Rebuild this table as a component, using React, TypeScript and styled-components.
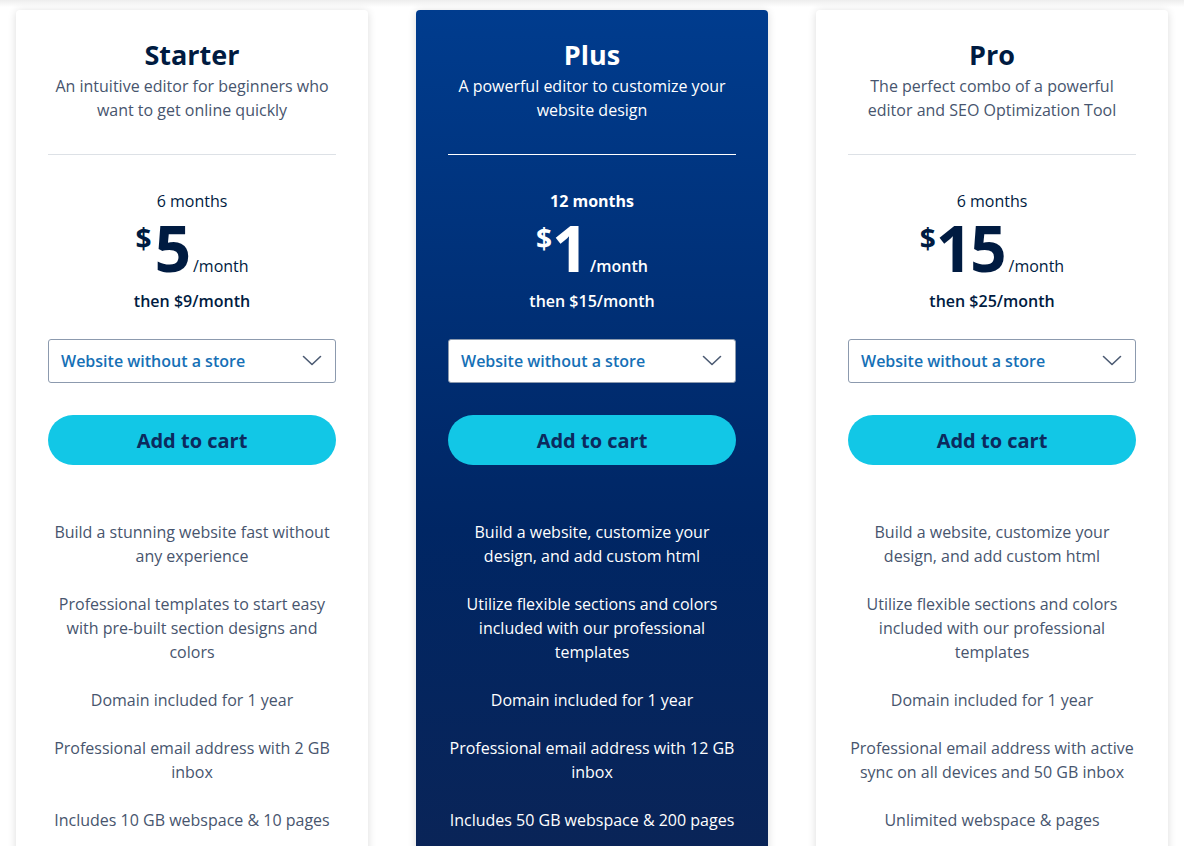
import styled, { createGlobalStyle, css } from 'styled-components';

// pricing cards, three plans side by side
const GlobalStyle = createGlobalStyle`
  body {
    margin: 0;
    background: linear-gradient(to bottom, #ededed 0, #ffffff 7px) no-repeat, #ffffff;
    font-family: 'Open Sans', 'Liberation Sans', sans-serif;
  }
`;

const Page = styled.div`
  display: grid;
  grid-template-columns: repeat(3, 352px);
  gap: 48px;
  padding: 10px 16px 0;
`;

const Card = styled.div<{ $featured?: boolean }>`
  display: flex;
  flex-direction: column;
  align-items: center;
  padding: 28px 32px 40px;
  border-radius: 4px;
  background: #ffffff;
  box-shadow: 0 1px 8px rgba(0, 0, 0, 0.14);
  color: #47556e;
  text-align: center;
  ${(p) =>
    p.$featured &&
    css`
      background: linear-gradient(to bottom, #003c8e 0, #002664 520px, #0a2457 850px);
      color: #ffffff;
    `}
`;

const Title = styled.h2<{ $featured?: boolean }>`
  margin: 0;
  font-size: 27px;
  line-height: 34px;
  font-weight: 700;
  color: ${(p) => (p.$featured ? '#ffffff' : '#001b41')};
`;

const Desc = styled.p`
  margin: 2px 0 0;
  width: 288px;
  font-size: 16px;
  line-height: 24px;
`;

const Divider = styled.hr<{ $featured?: boolean }>`
  width: 100%;
  margin: 32px 0 0;
  border: 0;
  height: 1px;
  background: ${(p) => (p.$featured ? '#ffffff' : '#dde1e6')};
`;

const Term = styled.div<{ $featured?: boolean }>`
  margin-top: 34px;
  font-size: 16px;
  line-height: 24px;
  font-weight: ${(p) => (p.$featured ? 700 : 400)};
  color: ${(p) => (p.$featured ? '#ffffff' : '#001b41')};
`;

const PriceRow = styled.div<{ $featured?: boolean }>`
  display: flex;
  justify-content: center;
  align-items: baseline;
  color: ${(p) => (p.$featured ? '#ffffff' : '#001b41')};
`;

const Currency = styled.span`
  align-self: flex-start;
  margin-top: 11px;
  margin-right: 3px;
  font-size: 28px;
  line-height: 28px;
  font-weight: 700;
`;

const Amount = styled.span`
  font-size: 64px;
  line-height: 70px;
  font-weight: 700;
  letter-spacing: -2px;
  font-variant-numeric: proportional-nums;
  font-feature-settings: 'pnum' 1;
`;

const Per = styled.span<{ $featured?: boolean }>`
  margin-left: 4px;
  font-size: 16px;
  font-weight: ${(p) => (p.$featured ? 600 : 400)};
`;

const Then = styled.div<{ $featured?: boolean }>`
  margin-top: 6px;
  font-size: 16px;
  line-height: 24px;
  font-weight: 600;
  color: ${(p) => (p.$featured ? '#ffffff' : '#001b41')};
`;

const Select = styled.div`
  box-sizing: border-box;
  display: flex;
  align-items: center;
  justify-content: space-between;
  width: 100%;
  height: 44px;
  margin-top: 26px;
  padding: 0 13px 0 12px;
  background: #ffffff;
  border: 1px solid #8c9aae;
  border-radius: 3px;
  color: #1670b6;
  font-size: 16px;
  font-weight: 600;
`;

const CartButton = styled.button`
  width: 100%;
  height: 50px;
  margin-top: 32px;
  border: 0;
  border-radius: 25px;
  background: #12c7e6;
  color: #0c2a5e;
  font-family: 'Open Sans', 'Liberation Sans', sans-serif;
  font-size: 20px;
  font-weight: 700;
  cursor: pointer;
`;

const Features = styled.ul`
  display: flex;
  flex-direction: column;
  gap: 24px;
  width: 288px;
  margin: 55px 0 0;
  padding: 0;
  list-style: none;
`;

const Feature = styled.li`
  font-size: 16px;
  line-height: 24px;
`;

const Chevron = () => (
  <svg width="20" height="12" viewBox="0 0 20 12" fill="none">
    <path d="M1.5 1.5 L10 9.5 L18.5 1.5" stroke="#4b5a72" strokeWidth="1.6" strokeLinecap="round" strokeLinejoin="round" />
  </svg>
);

type Plan = {
  name: string;
  desc: string;
  term: string;
  price: string;
  then: string;
  featured?: boolean;
  features: string[];
};

const plans: Plan[] = [
  {
    name: 'Starter',
    desc: 'An intuitive editor for beginners who want to get online quickly',
    term: '6 months',
    price: '5',
    then: 'then $9/month',
    features: [
      'Build a stunning website fast without any experience',
      'Professional templates to start easy with pre-built section designs and colors',
      'Domain included for 1 year',
      'Professional email address with 2 GB inbox',
      'Includes 10 GB webspace & 10 pages',
    ],
  },
  {
    name: 'Plus',
    desc: 'A powerful editor to customize your website design',
    term: '12 months',
    price: '1',
    then: 'then $15/month',
    featured: true,
    features: [
      'Build a website, customize your design, and add custom html',
      'Utilize flexible sections and colors included with our professional templates',
      'Domain included for 1 year',
      'Professional email address with 12 GB inbox',
      'Includes 50 GB webspace & 200 pages',
    ],
  },
  {
    name: 'Pro',
    desc: 'The perfect combo of a powerful editor and SEO Optimization Tool',
    term: '6 months',
    price: '15',
    then: 'then $25/month',
    features: [
      'Build a website, customize your design, and add custom html',
      'Utilize flexible sections and colors included with our professional templates',
      'Domain included for 1 year',
      'Professional email address with active sync on all devices and 50 GB inbox',
      'Unlimited webspace & pages',
    ],
  },
];

export default function App() {
  return (
    <>
      <GlobalStyle />
      <Page>
        {plans.map((plan) => (
          <Card key={plan.name} $featured={plan.featured}>
            <Title $featured={plan.featured}>{plan.name}</Title>
            <Desc>{plan.desc}</Desc>
            <Divider $featured={plan.featured} />
            <Term $featured={plan.featured}>{plan.term}</Term>
            <PriceRow $featured={plan.featured}>
              <Currency>$</Currency>
              <Amount>{plan.price}</Amount>
              <Per $featured={plan.featured}>/month</Per>
            </PriceRow>
            <Then $featured={plan.featured}>{plan.then}</Then>
            <Select>
              <span>Website without a store</span>
              <Chevron />
            </Select>
            <CartButton>Add to cart</CartButton>
            <Features>
              {plan.features.map((f) => (
                <Feature key={f}>{f}</Feature>
              ))}
            </Features>
          </Card>
        ))}
      </Page>
    </>
  );
}
